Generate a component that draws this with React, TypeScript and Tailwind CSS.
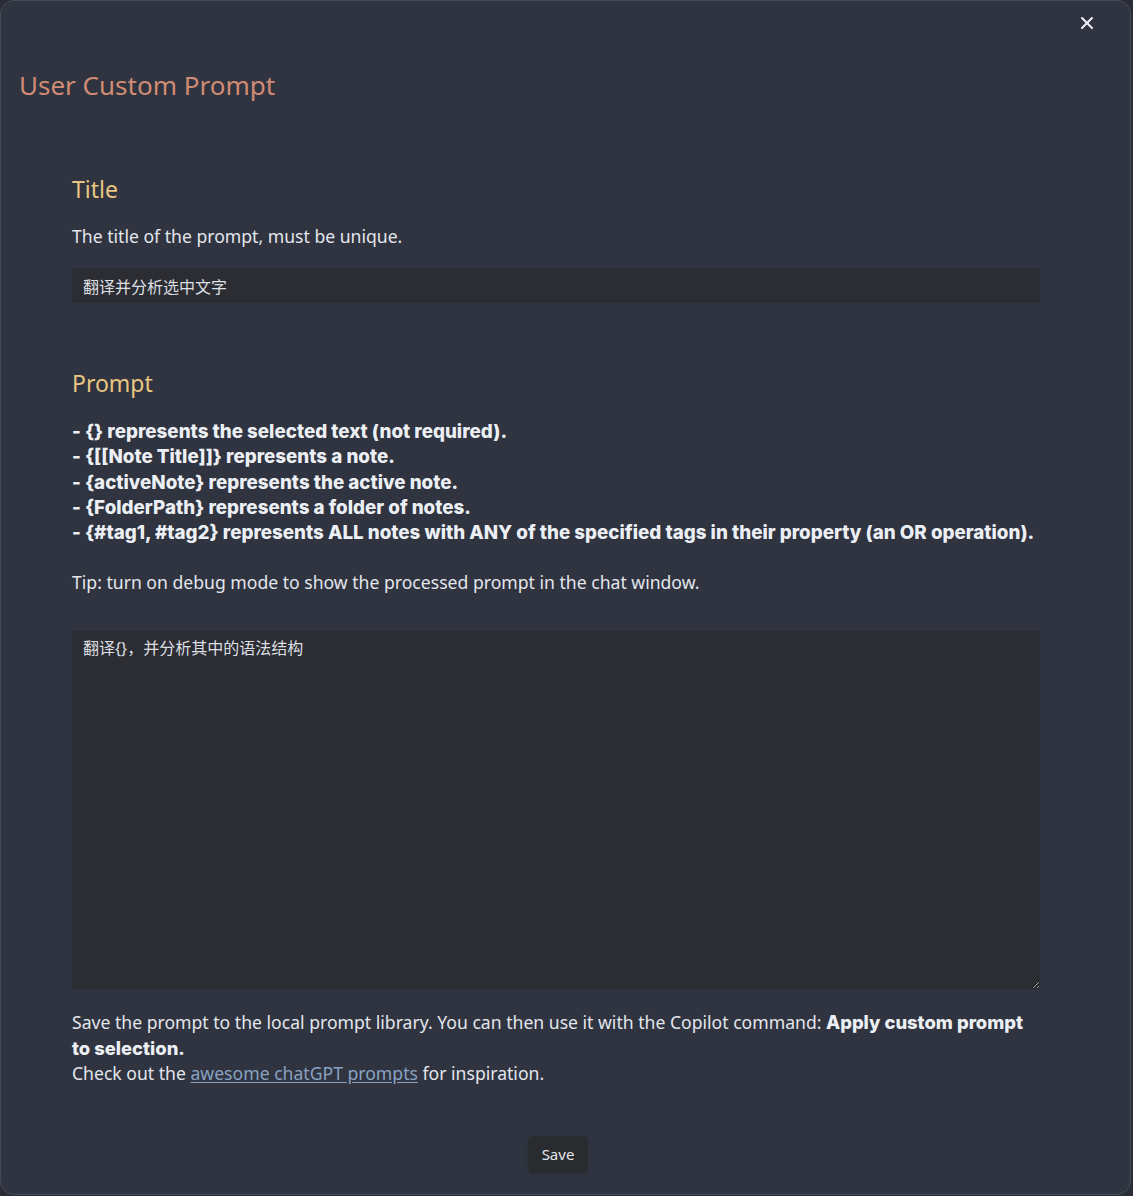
import { X } from 'lucide-react';

const tips = [
    '- {} represents the selected text (not required).',
    '- {[[Note Title]]} represents a note.',
    '- {activeNote} represents the active note.',
    '- {FolderPath} represents a folder of notes.',
    '- {#tag1, #tag2} represents ALL notes with ANY of the specified tags in their property (an OR operation).',
];

const body = "font-['Noto_Sans','Open_Sans','Noto_Sans_CJK_SC',sans-serif]";
const bold = "font-['Inter','Noto_Sans_CJK_SC',sans-serif] font-extrabold";
const heading = "font-['Noto_Sans','Noto_Sans_CJK_SC',sans-serif]";

export default function App() {
    return (
        <div className="w-[1133px] h-[1196px] bg-[#2a2d35]">
            <div className={`relative w-[1131px] h-[1195px] bg-[#2f3440] rounded-[14px] border border-[#444a57] text-[#e3e6ec] ${body}`}>
                <button className="absolute right-[33px] top-[12px] text-[#eceff4]" aria-label="Close">
                    <X size={20} strokeWidth={2.5} />
                </button>

                <h1 className={`pt-[64px] pl-[18px] text-[26px] leading-[40px] text-[#d08b74] ${heading}`}>
                    User Custom Prompt
                </h1>

                <div className="pl-[71px] pr-[90px] pt-[66px]">
                    <section>
                        <h2 className={`text-[23px] leading-[36px] text-[#e9c682] ${heading}`}>Title</h2>
                        <p className="mt-[16px] text-[17.6px] leading-[26px]">The title of the prompt, must be unique.</p>
                        <input
                            className="mt-[19px] w-full h-[35px] px-[11px] bg-[#2c2d32] rounded-[4px] text-[16px] text-[#dcdfe4] outline-none"
                            defaultValue="翻译并分析选中文字"
                        />
                    </section>

                    <section className="mt-[62px]">
                        <h2 className={`text-[23px] leading-[36px] text-[#e9c682] ${heading}`}>Prompt</h2>
                        <div className={`mt-[18px] text-[18.8px] leading-[25.3px] text-[#eceff4] ${bold}`}>
                            {tips.map(t => (
                                <div key={t}>{t}</div>
                            ))}
                        </div>
                        <p className="mt-[24px] text-[17.6px] leading-[26px]">
                            Tip: turn on debug mode to show the processed prompt in the chat window.
                        </p>
                        <textarea
                            className="mt-[36px] block w-full h-[358px] px-[11px] py-[5px] bg-[#2c2d32] rounded-[4px] text-[16px] leading-[24px] text-[#dcdfe4] outline-none resize-y"
                            defaultValue="翻译{}，并分析其中的语法结构"
                        />
                        <div className="mt-[21px] text-[17.6px] leading-[25.5px]">
                            <p>
                                Save the prompt to the local prompt library. You can then use it with the Copilot command:{' '}
                                <strong className={`text-[#eceff4] ${bold} text-[18.4px] leading-[25.5px]`}>Apply custom prompt to selection.</strong>
                            </p>
                            <p>
                                Check out the{' '}
                                <a href="#" className="text-[#8aa2c0] underline underline-offset-2">awesome chatGPT prompts</a>{' '}
                                for inspiration.
                            </p>
                        </div>
                    </section>

                    <div className="flex justify-center mt-[49px] pl-[4px]">
                        <button className="h-[37px] px-[14px] rounded-[6px] bg-[#2a2b2f] text-[15px] text-[#e3e6ec] shadow-sm">
                            Save
                        </button>
                    </div>
                </div>
            </div>
        </div>
    );
}
